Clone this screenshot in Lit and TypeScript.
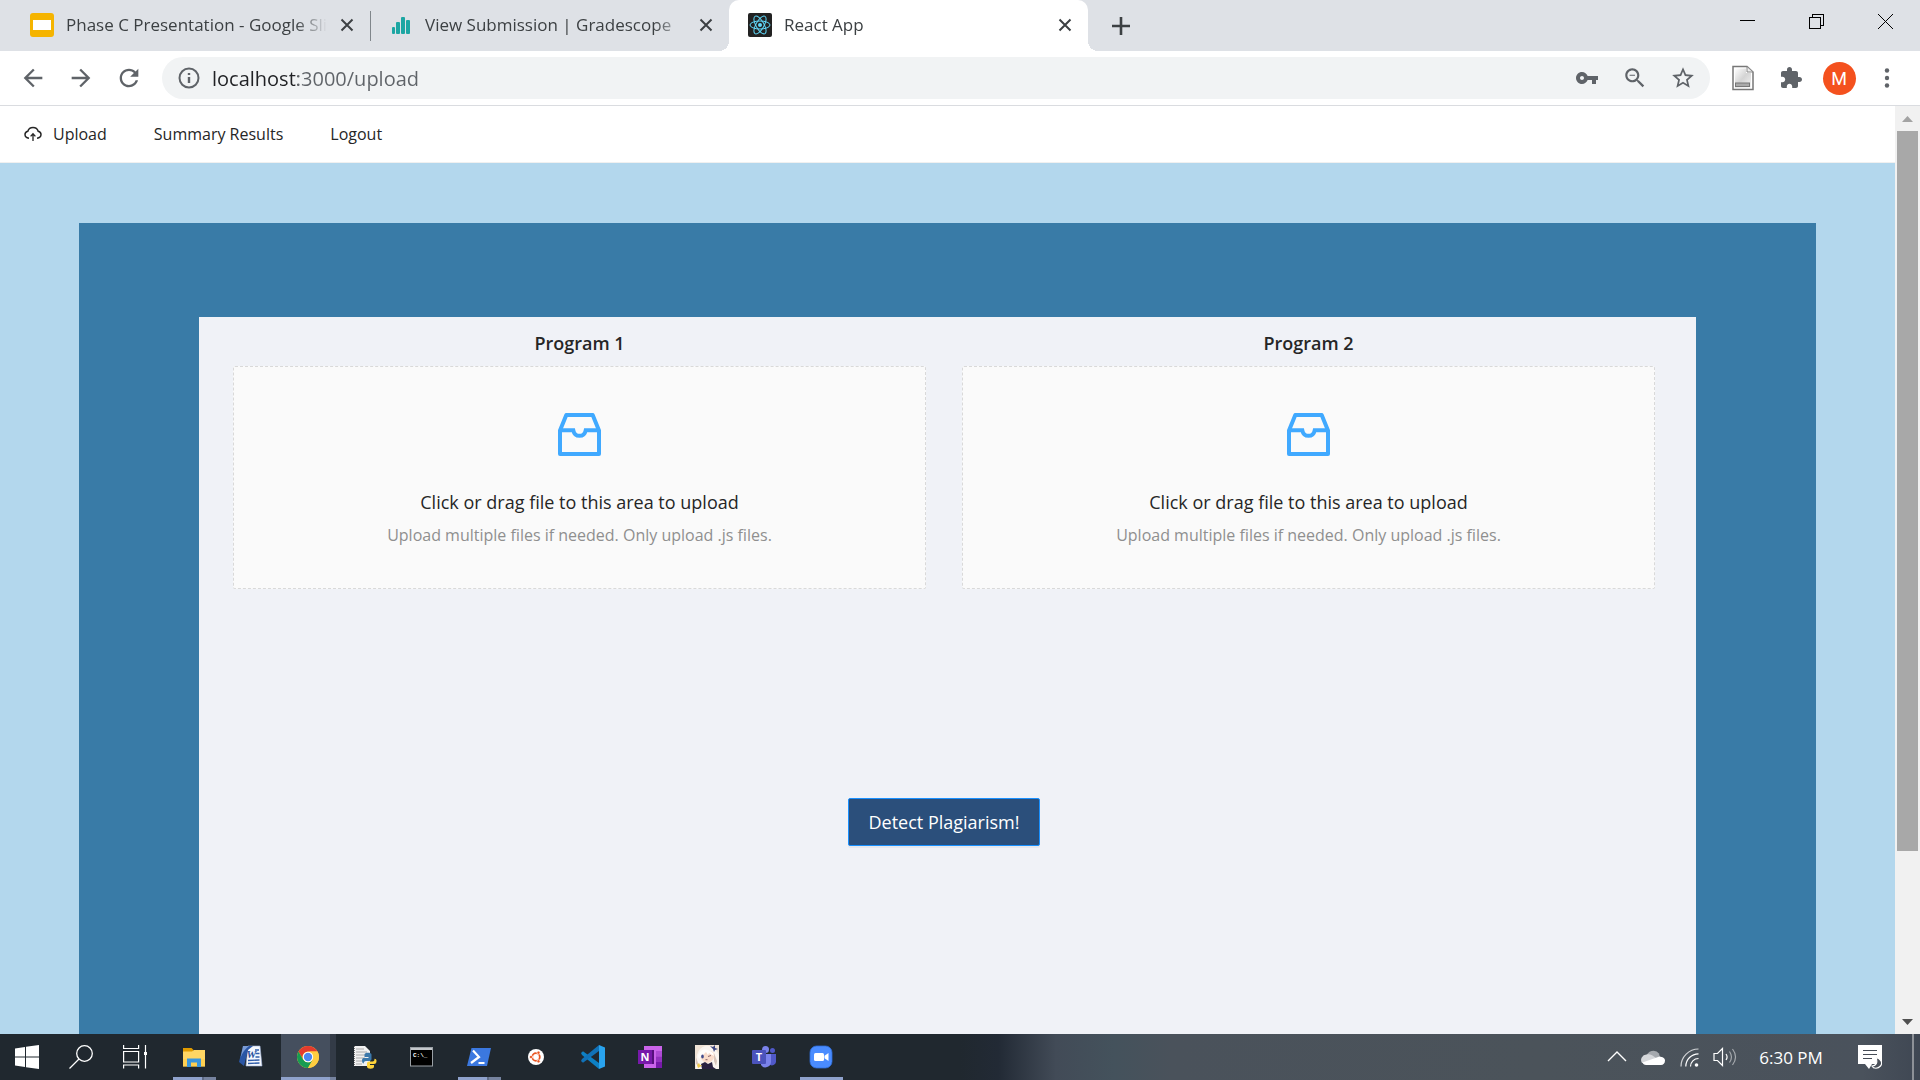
import { LitElement, html, css, svg, nothing, TemplateResult } from "lit";
import { customElement, property } from "lit/decorators.js";
import { classMap } from "lit/directives/class-map.js";

const material = (d: string) => html`<svg viewBox="0 0 24 24" fill="currentColor" aria-hidden="true"><path d=${d} /></svg>`;

const closeIcon = html`<svg viewBox="0 0 14 14" fill="none" stroke="currentColor" stroke-width="2" aria-hidden="true"><path d="M1.5 1.5l11 11M12.5 1.5l-11 11" /></svg>`;

const slidesIcon = html`<svg viewBox="0 0 24 24" aria-hidden="true"><rect width="24" height="24" rx="3" fill="#f5b400" /><rect x="3" y="7" width="18" height="10" fill="#fff" /></svg>`;

const barsIcon = html`<svg viewBox="0 0 24 24" fill="#1ca6a3" aria-hidden="true"><rect x="3" y="14" width="3" height="7" rx="1" /><rect x="7" y="9" width="4" height="12" rx="1" /><rect x="12" y="4" width="4" height="17" rx="1" /><rect x="17" y="7" width="4" height="14" rx="1" /></svg>`;

const reactIcon = html`<svg viewBox="0 0 24 24" aria-hidden="true"><rect width="24" height="24" rx="2" fill="#222" /><g fill="none" stroke="#61dafb" stroke-width="1"><ellipse cx="12" cy="12" rx="10" ry="4" /><ellipse cx="12" cy="12" rx="10" ry="4" transform="rotate(60 12 12)" /><ellipse cx="12" cy="12" rx="10" ry="4" transform="rotate(120 12 12)" /></g><circle cx="12" cy="12" r="2" fill="#61dafb" /></svg>`;

const backIcon = material("M20 11H7.83l5.59-5.59L12 4l-8 8 8 8 1.41-1.41L7.83 13H20v-2z");
const forwardIcon = material("M12 4l-1.41 1.41L16.17 11H4v2h12.17l-5.58 5.59L12 20l8-8z");
const reloadIcon = material("M17.65 6.35C16.2 4.9 14.21 4 12 4c-4.42 0-7.99 3.58-7.99 8s3.57 8 7.99 8c3.73 0 6.84-2.55 7.73-6h-2.08c-.82 2.33-3.04 4-5.65 4-3.31 0-6-2.69-6-6s2.69-6 6-6c1.66 0 3.14.69 4.22 1.78L13 11h7V4l-2.35 2.35z");
const keyIcon = material("M12.65 10C11.83 7.67 9.61 6 7 6c-3.31 0-6 2.69-6 6s2.69 6 6 6c2.61 0 4.83-1.67 5.65-4H17v4h4v-4h2v-4H12.65zM7 14c-1.1 0-2-.9-2-2s.9-2 2-2 2 .9 2 2-.9 2-2 2z");
const zoomOutIcon = material("M15.5 14h-.79l-.28-.27C15.41 12.59 16 11.11 16 9.5 16 5.91 13.09 3 9.5 3S3 5.91 3 9.5 5.91 16 9.5 16c1.61 0 3.09-.59 4.23-1.57l.27.28v.79l5 4.99L20.49 19l-4.99-5zm-6 0C7.01 14 5 11.99 5 9.5S7.01 5 9.5 5 14 7.01 14 9.5 11.99 14 9.5 14zM7 9h5v1H7z");
const starIcon = material("M22 9.24l-7.19-.62L12 2 9.19 8.63 2 9.24l5.46 4.73L5.82 21 12 17.27 18.18 21l-1.63-7.03L22 9.24zM12 15.4l-3.76 2.27 1-4.28-3.32-2.88 4.38-.38L12 6.1l1.71 4.04 4.38.38-3.32 2.88 1 4.28L12 15.4z");
const puzzleIcon = material("M20.5 11H19V7c0-1.1-.9-2-2-2h-4V3.5C13 2.12 11.88 1 10.5 1S8 2.12 8 3.5V5H4c-1.1 0-1.99.9-1.99 2v3.8H3.5c1.49 0 2.7 1.21 2.7 2.7s-1.21 2.7-2.7 2.7H2V20c0 1.1.9 2 2 2h3.8v-1.5c0-1.49 1.21-2.7 2.7-2.7 1.49 0 2.7 1.21 2.7 2.7V22H17c1.1 0 2-.9 2-2v-4h1.5c1.38 0 2.5-1.12 2.5-2.5S21.88 11 20.5 11z");
const infoIcon = html`<svg viewBox="0 0 22 22" fill="none" stroke="currentColor" stroke-width="2" aria-hidden="true"><circle cx="11" cy="11" r="9.5" /><path d="M11 10v6M11 6v2" stroke-width="2.4" /></svg>`;
const documentIcon = html`<svg viewBox="0 0 24 26" aria-hidden="true"><defs><linearGradient id="paper" x2="1" y2="1"><stop stop-color="#fff" /><stop offset=".5" stop-color="#d4d4d4" /><stop offset="1" stop-color="#f2f2f2" /></linearGradient></defs><path d="M2 1.5h14l6 5.5v17.5H2z" fill="#fff" stroke="#777" stroke-width="1.5" /><path d="M4 3.5h11V8h5v14.500H4z" fill="url(#paper)" /><path d="M16 1.5V7h6z" fill="#eee" stroke="#888" /><rect x="4.5" y="18" width="14" height="3.5" fill="#aaa" stroke="#777" /></svg>`;
const dotsIcon = html`<svg viewBox="0 0 24 24" fill="currentColor" aria-hidden="true"><circle cx="12" cy="4.5" r="2.2" /><circle cx="12" cy="12" r="2.2" /><circle cx="12" cy="19.5" r="2.2" /></svg>`;
const plusIcon = html`<svg viewBox="0 0 20 20" fill="none" stroke="currentColor" stroke-width="2.6" aria-hidden="true"><path d="M10 1v18M1 10h18" /></svg>`;

const minimizeIcon = html`<svg viewBox="0 0 15 15" shape-rendering="crispEdges" aria-hidden="true"><rect y="6" width="15" height="1" /></svg>`;
const restoreIcon = html`<svg viewBox="0 0 15 15" fill="none" stroke="currentColor" shape-rendering="crispEdges" aria-hidden="true"><path d="M.5 3.5h11v11H.5zM3.5 3.5v-3h11v11h-3" /></svg>`;
const windowCloseIcon = html`<svg viewBox="0 0 15 15" fill="none" stroke="currentColor" aria-hidden="true"><path d="M0 0l15 15M15 0L0 15" /></svg>`;

const cloudUploadIcon = html`<svg viewBox="0 0 18 16" fill="none" stroke="currentColor" stroke-width="1.5" aria-hidden="true"><path d="M5 12.2C2.6 12 1 10.5 1 8.6 1 7 2.2 5.7 3.8 5.3 4.5 3 6.5 1.5 9 1.5s4.5 1.5 5.2 3.8C15.8 5.7 17 7 17 8.6c0 1.9-1.6 3.4-4 3.6" /><path d="M9 15V8M6.6 10.4L9 7.8l2.4 2.6" stroke-width="1.3" /></svg>`;
const inboxIcon = html`<svg viewBox="0 0 43 43" fill="none" stroke="currentColor" stroke-width="4" stroke-linejoin="round" aria-hidden="true"><path d="M2 17.5L8.3 2h26.400L41 17.5V41H2z" /><path d="M2 17.3h13.3c.7 3.400 3.2 5.5 6.2 5.5s5.500-2.1 6.200-5.500H41" stroke-linejoin="miter" /></svg>`;

/* Taskbar pictures share one 24-unit canvas. */
const bar = (content: unknown) => html`<svg viewBox="0 0 24 24" aria-hidden="true">${content}</svg>`;

const windowsIcon = bar(svg`<path fill="#fff" d="M0 3.4L10 2v9.4H0zM11 1.8L24 0v11.4H11zM0 12.4h10V22L0 20.6zM11 12.4h13V24l-13-1.8z" />`);
const searchIcon = bar(svg`<g fill="none" stroke="#fff" stroke-width="1.3"><circle cx="15.5" cy="8.5" r="7.8" /><path d="M10 14L.5 23.5" /></g>`);
const taskViewIcon = bar(svg`<g fill="none" stroke="#fff" stroke-width="1.2"><path d="M.6 0v3.5h15V0M.6 23.5V20h15v3.5M.6 6.5h15v10.5H.6zM22.5 0v23.5" /></g><rect x="21" y="7" width="3" height="3" fill="#fff" />`);
const explorerIcon = bar(svg`<path fill="#e09b00" d="M1 3h8.5l2 2V9H1z" /><path fill="#ffd664" d="M1 6.5h9l2-1.5h11v16.500H1z" /><path fill="#ffcb45" d="M1 14h22v7.500H1z" opacity=".6" /><path fill="#3a96dd" d="M5 13.5h14V22h-4v-4.5H9V22H5z" />`);
const wordIcon = bar(svg`<path fill="#f5f8fd" stroke="#9fb4d8" stroke-width=".6" d="M9 1h12l2 20H7z" /><path stroke="#2f5daa" stroke-width="1.4" d="M16 5h4M16.500 8.500h4M16.500 12h4M9 15.500l11.500-.5M9 18.500l11.500-.5" /><path fill="#2a56a5" d="M4 1h10L9 5 7 13l-2 8-5-4z" /><path fill="#9db9e8" d="M4 1h6C6 4 3 8 1.500 13z" opacity=".7" /><text x="7.500" y="12.500" font-family="Liberation Serif, serif" font-size="11" font-weight="700" font-style="italic" fill="#274f9c">W</text>`);
const chromeIcon = bar(svg`<circle cx="12" cy="12" r="11" fill="#ffcd40" /><path fill="#e33b2e" d="M2.5 6.5A11 11 0 0 1 21.5 6.5H12A5.5 5.5 0 0 0 7.2 14.8z" /><path fill="#179c52" d="M2.5 6.5L7.2 14.8A5.5 5.5 0 0 0 12.400 17.5L9.8 22.8A11 11 0 0 1 2.5 6.5z" /><path fill="#179c52" d="M7.2 14.8A5.5 5.5 0 0 0 16.8 14.8L12 23 9.8 22.800z" /><path fill="#ffcd40" d="M12 6.5h9.5A11 11 0 0 1 12 23l4.8-8.200A5.5 5.5 0 0 0 12 6.5z" /><circle cx="12" cy="12" r="5.2" fill="#fff" /><circle cx="12" cy="12" r="4.2" fill="#4a86f0" />`);
const pythonIcon = bar(svg`<path fill="#f1f1f1" d="M1 1h11l5 5v15H1z" /><path stroke="#9a9a9a" stroke-width=".8" d="M3 4h8M3 7h11M3 10h11M3 13h9M3 16h6M3 19h6" /><path stroke="#777" stroke-dasharray="1 1" d="M1.5 1v20" /><path fill="#3c78aa" d="M9 15.5c0-2 .8-2.5 2.5-2.500h4v-1h-4V9.5c0-1.2 1.5-1.7 3.5-1.7s3.5.5 3.5 1.8V14c0 1.3-1 2-2 2h-3.5c-1.5 0-2.3 1-2.300 2.500-1.200 0-1.700-1.500-1.700-3z" /><path fill="#ffd43b" d="M23.5 16c0 2-.8 3-2.5 3h-4v1h4v1.8c0 1.2-1.5 2-3.5 2s-3.500-.8-3.500-2V18.500c0-1.300 1-2 2-2h3.500c1.500 0 2-1 2-2.700 1.500 0 2 1 2 2.200z" />`);
const terminalIcon = bar(svg`<rect x=".5" y="2.5" width="22" height="18.5" fill="#000" stroke="#9aa0a6" /><rect x="1" y="3" width="21" height="2" fill="#c4c8cc" /><text x="3" y="12" font-family="Liberation Mono, monospace" font-size="6" font-weight="700" fill="#fff">C:\\_</text>`);
const powershellIcon = bar(svg`<path fill="#3b78e0" d="M4.5 3H24l-4 18H0z" /><path fill="none" stroke="#fff" stroke-width="2.2" d="M6 5.5l6 6.5-8 6M11.5 18h6" />`);
const ubuntuIcon = bar(svg`<circle cx="12" cy="12" r="8" fill="#fff" /><circle cx="12" cy="12" r="3.8" fill="none" stroke="#e95420" stroke-width="1.8" /><g fill="#e95420" stroke="#fff" stroke-width=".7"><circle cx="7" cy="12" r="1.6" /><circle cx="14.5" cy="7.7" r="1.6" /><circle cx="14.5" cy="16.3" r="1.6" /></g>`);
const vscodeIcon = bar(svg`<path fill="#0d80c4" d="M0 8l2-1.8L18 18v6L1 10z" /><path fill="#1172b8" d="M0 16l2 1.8L18 6V0L1 14z" /><path fill="#29a3ee" d="M18 0l6 2.5v19L18 24z" />`);
const onenoteIcon = bar(svg`<path fill="#ca64ea" d="M6 1h18v22H6z" /><path fill="#ae4bd5" d="M18 6h6v5.5h-6z" /><path fill="#9332bf" d="M18 11.5h6V17h-6z" /><path fill="#7719aa" d="M18 17h6v6h-6z" /><path fill="#56107d" d="M6 5h10v14H6z" /><rect y="5" width="14" height="14" fill="#7719aa" /><text x="7" y="15.8" text-anchor="middle" font-family="Open Sans, sans-serif" font-size="11" font-weight="700" fill="#fff">N</text>`);
const portraitIcon = bar(svg`<rect width="24" height="24" fill="#efe3d6" /><path fill="#faf5f0" d="M1 24C0 14 2 3 10 1c8-1 12 4 14 10v13z" /><path fill="#f9dccb" d="M5 9c3-4 11-5 14 0 1 5-2 8-7 9-4-1-7-4-7-9z" /><path fill="#fffdfb" d="M3 11C5 4 11 2 18 8l1 3-5-3-1 2-2-3-4 4v-1l-3 4z" /><path fill="#d8c5bb" d="M19 8l3 8-1 5-2-5zM1 12l2 6 1 3-3-2z" /><ellipse cx="7.500" cy="11.500" rx="1.300" ry="1.900" fill="#3f4a8c" /><path fill="none" stroke="#6b4552" stroke-width=".8" d="M13 11.500l3-1M10.500 14.700h2" /><path fill="#2a2140" d="M7 24l-1-5 4-2 3 2 4-2 1 5 3 2z" /><path fill="#3b4580" d="M15 1l3 1 2-2 0 3 3 1-3 1-1 2-1-3z" /><path fill="#efc94f" d="M2 20l2-2 1 2 2 0-2 2-2 1z" />`);
const teamsIcon = bar(svg`<circle cx="13.5" cy="4.5" r="3.5" fill="#7b83eb" /><circle cx="20.5" cy="5.5" r="2.5" fill="#5059c9" /><path fill="#5059c9" d="M17 9h7v7a4 4 0 0 1-7 3z" /><path fill="#7b83eb" d="M9 9h10v8a5.5 5.5 0 0 1-10 3z" /><rect y="5" width="14" height="14" rx="1" fill="#4b53bc" /><text x="7" y="15.8" text-anchor="middle" font-family="Open Sans, sans-serif" font-size="11" font-weight="700" fill="#fff">T</text>`);
const meetingIcon = bar(svg`<rect x="1" y="1" width="22" height="22" rx="6.5" fill="#4a8cff" stroke="#2f6dd8" stroke-width=".8" /><rect x="5" y="8" width="10" height="8" rx="1.5" fill="#fff" /><path fill="#fff" d="M15.5 10.8L19.5 8v8l-4-2.8z" />`);

const chevronIcon = bar(svg`<path fill="none" stroke="#fff" stroke-width="1.4" d="M3 16l9-9 9 9" />`);
const cloudIcon = bar(svg`<path fill="#a5a9ae" d="M5.5 12A7 7 0 0 1 18 8.5l1 4-8 3z" /><path fill="#d5d7da" d="M1 18A5.500 5.500 0 0 1 5.500 9.500c3-1 6 .5 9.500 3.500l-9 5z" /><path fill="#fff" d="M1.500 17.500L18.500 11.500c3 .2 5.500 1.700 5.500 4.300s-1.800 4.200-4 4.200H5c-2 0-3-1-3.500-2.500z" />`);
const wifiIcon = bar(svg`<g fill="none" stroke="#fff" stroke-width="1.2"><path d="M4 21.5C4 12 12 4 21.5 4" opacity=".75" /><path d="M8.8 21.5C8.8 14.5 14.5 8.8 21.5 8.8M13.5 21.5c0-4.5 3.5-8 8-8" /></g><circle cx="19.5" cy="20" r="1.8" fill="#fff" />`);
const volumeIcon = bar(svg`<g fill="none" stroke="#fff" stroke-width="1.2"><path d="M1 8.5h3.5L9.5 3.5v17l-5-5H1z" /><path d="M13 9c1.3 1.8 1.3 4.2 0 6" /><path d="M16.5 6.5c2.5 3.5 2.5 7.5 0 11M19.5 4c3.8 5 3.8 11 0 16" opacity=".5" /></g>`);
const noticeIcon = bar(svg`<path fill="#fff" d="M0 0h24v19H14l-3 5-4-5H0z" /><path stroke="#454c56" stroke-width="1.2" d="M5 5.5h14M5 9.5h14M5 13.5h9" /><path fill="#4a5059" stroke="#fff" stroke-width="1.2" d="M18 12.5c5 1 7 5.5 4.5 8.5-2.5 3-7 3-8.5 0 4 0 6-3.5 4-8.5z" />`);

interface TaskItem {
  name: string;
  icon: TemplateResult;
  state?: "open" | "stacked" | "active";
}

const tasks: TaskItem[] = [
  { name: "File Explorer", icon: explorerIcon, state: "stacked" },
  { name: "Word", icon: wordIcon },
  { name: "Chrome", icon: chromeIcon, state: "active" },
  { name: "Python IDLE", icon: pythonIcon },
  { name: "Command Prompt", icon: terminalIcon },
  { name: "PowerShell", icon: powershellIcon, state: "stacked" },
  { name: "Ubuntu", icon: ubuntuIcon },
  { name: "Visual Studio Code", icon: vscodeIcon },
  { name: "OneNote", icon: onenoteIcon },
  { name: "Game", icon: portraitIcon },
  { name: "Teams", icon: teamsIcon },
  { name: "Zoom", icon: meetingIcon, state: "open" },
];

const reset = css`
  *, :host { box-sizing: border-box; }
  button, input { font: inherit; color: inherit; background: none; border: 0; padding: 0; margin: 0; }
  svg { display: block; flex: none; }
  a { color: inherit; text-decoration: none; }
`;

@customElement("tab-strip")
class TabStrip extends LitElement {
  static styles = [reset, css`
    :host { display: flex; height: 51px; padding-left: 11px; background: #dee1e6; color: #3c4043; font-size: 17px; }
    .tab { position: relative; flex: 0 1 359px; min-width: 0; display: flex; align-items: center; gap: 12px; padding: 0 15px 2px 19px; }
    .tab > svg { width: 24px; height: 24px; }
    .title { flex: 1; min-width: 0; overflow: hidden; white-space: nowrap; line-height: 24px; mask-image: linear-gradient(90deg, #000 calc(100% - 32px), transparent); }
    .divided::before { content: ""; position: absolute; left: 0; top: 11px; bottom: 10px; width: 1px; background: #80868b; }
    .active { background: #fff; border-radius: 10px 10px 0 0; }
    .active::before, .active::after { content: ""; position: absolute; bottom: 0; width: 10px; height: 10px; }
    .active::before { right: 100%; background: radial-gradient(circle at 0 0, transparent 10px, #fff 10px); }
    .active::after { left: 100%; background: radial-gradient(circle at 100% 0, transparent 10px, #fff 10px); }
    .close { display: grid; place-items: center; width: 16px; height: 16px; }
    .close svg { width: 14px; height: 14px; }
    .add { display: grid; place-items: center; width: 66px; }
    .add svg { width: 20px; height: 20px; }
    .window { display: flex; margin-left: auto; height: 43px; color: #000; }
    .window button { display: grid; place-items: center; width: 69px; }
    .window svg { width: 15px; height: 15px; }
  `];
  render() {
    const tabs = [
      { title: "Phase C Presentation - Google Slides", icon: slidesIcon },
      { title: "View Submission | Gradescope", icon: barsIcon, divided: true },
      { title: "React App", icon: reactIcon, active: true },
    ];
    return html`
      ${tabs.map(t => html`
        <div class=${classMap({ tab: true, active: !!t.active, divided: !!t.divided })}>
          ${t.icon}<span class="title">${t.title}</span>
          <button class="close" aria-label="Close tab">${closeIcon}</button>
        </div>`)}
      <button class="add" aria-label="New tab">${plusIcon}</button>
      <div class="window">
        <button aria-label="Minimize">${minimizeIcon}</button>
        <button aria-label="Restore">${restoreIcon}</button>
        <button aria-label="Close">${windowCloseIcon}</button>
      </div>`;
  }
}

@customElement("browser-toolbar")
class BrowserToolbar extends LitElement {
  static styles = [reset, css`
    :host { display: flex; align-items: center; height: 55px; padding: 0 9px; background: #fff; border-bottom: 1px solid #dadce0; color: #5f6368; }
    .tool { display: grid; place-items: center; width: 48px; height: 42px; flex: none; }
    .tool svg { width: 24px; height: 24px; }
    .nav svg { width: 28px; height: 28px; }
    .wide svg { width: 26px; height: 26px; }
    .address { flex: 1; min-width: 0; display: flex; align-items: center; height: 42px; margin: 0 9px; padding: 0 3px 0 16px; border-radius: 21px; background: #f1f3f4; }
    .address > svg { width: 22px; height: 22px; margin-right: 12px; }
    .address input { flex: 1; min-width: 0; height: 30px; font-size: 20px; color: transparent; background: linear-gradient(90deg, #202124 86px, #5f6368 86px); background-clip: text; -webkit-background-clip: text; }
    .avatar { display: grid; place-items: center; width: 33px; height: 33px; border-radius: 50%; background: #f4511e; color: #fff; font: 18px/33px Roboto, sans-serif; }
  `];
  render() {
    return html`
      <button class="tool nav" aria-label="Back">${backIcon}</button>
      <button class="tool nav" aria-label="Forward">${forwardIcon}</button>
      <button class="tool nav" aria-label="Reload">${reloadIcon}</button>
      <div class="address">
        ${infoIcon}
        <input type="text" aria-label="Address" value="localhost:3000/upload" />
        <button class="tool" aria-label="Passwords">${keyIcon}</button>
        <button class="tool wide" aria-label="Zoom">${zoomOutIcon}</button>
        <button class="tool wide" aria-label="Bookmark">${starIcon}</button>
      </div>
      <button class="tool wide" aria-label="Document extension">${documentIcon}</button>
      <button class="tool" aria-label="Extensions">${puzzleIcon}</button>
      <button class="tool" aria-label="Profile"><span class="avatar">M</span></button>
      <button class="tool" aria-label="Menu">${dotsIcon}</button>`;
  }
}

@customElement("upload-area")
class UploadArea extends LitElement {
  @property() heading = "";
  static styles = [reset, css`
    :host { display: block; text-align: center; }
    h2 { margin: 0 0 8px; font-size: 18px; line-height: 30px; font-weight: 600; }
    label { position: relative; display: flex; flex-direction: column; align-items: center; padding: 46px 16px 36px; border: 1px dashed #d9d9d9; border-radius: 2px; background: #fafafa; cursor: pointer; }
    input { position: absolute; inset: 0; width: 100%; height: 100%; opacity: 0; cursor: pointer; }
    svg { width: 43px; height: 43px; margin-bottom: 30px; color: #40a9ff; }
    .prompt { font-size: 18px; line-height: 33px; }
    .hint { font-size: 16px; line-height: 33px; color: #8f8f8f; }
  `];
  render() {
    return html`
      <h2>${this.heading}</h2>
      <label>
        <input type="file" multiple accept=".js" />
        ${inboxIcon}
        <span class="prompt">Click or drag file to this area to upload</span>
        <span class="hint">Upload multiple files if needed. Only upload .js files.</span>
      </label>`;
  }
}

@customElement("upload-page")
class UploadPage extends LitElement {
  static styles = [reset, css`
    :host { display: flex; flex-direction: column; min-width: 0; background: #b3d7ed; color: #262626; }
    nav { display: flex; align-items: center; gap: 47px; height: 57px; padding-left: 24px; background: #fff; border-bottom: 1px solid #f0f0f0; font-size: 16px; }
    nav a { display: flex; align-items: center; gap: 11px; }
    nav svg { width: 18px; height: 16px; }
    .frame { flex: 1; display: flex; margin: 60px 79px 0; padding: 94px 120px 0; background: #397ba7; }
    main { flex: 1; padding: 11px 41px 0 34px; background: #f0f2f7; }
    .areas { display: grid; grid-template-columns: 1fr 1fr; gap: 36px; }
    .detect { display: block; width: 192px; height: 48px; margin: 209px auto 0; border: 1px solid #1890ff; border-radius: 2px; background: #2b4f7b; color: #fff; font-size: 18px; box-shadow: 0 2px 0 rgba(0, 0, 0, 0.04); }
  `];
  render() {
    return html`
      <nav>
        <a href="#upload">${cloudUploadIcon}Upload</a>
        <a href="#summary">Summary Results</a>
        <a href="#logout">Logout</a>
      </nav>
      <div class="frame">
        <main>
          <div class="areas">
            <upload-area heading="Program 1"></upload-area>
            <upload-area heading="Program 2"></upload-area>
          </div>
          <button class="detect">Detect Plagiarism!</button>
        </main>
      </div>`;
  }
}

@customElement("page-scrollbar")
class PageScrollbar extends LitElement {
  static styles = [reset, css`
    :host { display: flex; flex-direction: column; width: 25px; background: #f1f1f1; }
    button { display: grid; place-items: center; height: 25px; color: #a3a3a3; }
    .down { color: #505050; }
    svg { width: 11px; height: 6px; }
    .track { flex: 1; padding: 0 2px; }
    .thumb { height: 82%; background: #a8a8a8; }
  `];
  render() {
    return html`
      <button aria-label="Scroll up"><svg viewBox="0 0 11 6" fill="currentColor"><path d="M0 6L5.5 0 11 6z" /></svg></button>
      <div class="track"><div class="thumb"></div></div>
      <button class="down" aria-label="Scroll down"><svg viewBox="0 0 11 6" fill="currentColor"><path d="M0 0L5.5 6 11 0z" /></svg></button>`;
  }
}

@customElement("task-bar")
class TaskBar extends LitElement {
  static styles = [reset, css`
    :host { display: flex; height: 46px; color: #fff; background: linear-gradient(90deg, #20282f 50%, #222a35 52%, #424b57 55%, #44525c 58%, #4a525b 61%, #4b535a 80%, #4a525c 97%, #3f4753); }
    .system, .apps, .tray { display: flex; }
    .apps { margin-left: 3px; }
    button { position: relative; display: grid; place-items: center; height: 46px; }
    svg { width: 24px; height: 24px; }
    .system button { width: 54px; }
    .apps button { width: 57px; }
    .active { background: linear-gradient(90deg, #454f5e 49px, #333b47 49px) no-repeat 2px 0 / 55px 100%; }
    .mark { position: absolute; left: 8px; right: 6px; bottom: 0; height: 3px; background: #8fa2cc; }
    .stacked .mark { background: linear-gradient(90deg, #8fa2cc 29px, #5f6c86 29px 31px, #76839f 31px); }
    .active .mark { left: 2px; right: 0; background: linear-gradient(90deg, #8fa2cc 49px, #76839f 49px); }
    .tray { margin-left: auto; }
    .tray .small { width: 36px; }
    .tray .clock { width: 96px; font-size: 17px; white-space: nowrap; }
    .tray .notice { width: 62px; }
    .tray .desktop { width: 8px; margin-left: 11px; border-left: 2px solid #8d9197; }
  `];
  render() {
    return html`
      <div class="system">
        <button aria-label="Start">${windowsIcon}</button>
        <button aria-label="Search">${searchIcon}</button>
        <button aria-label="Task View">${taskViewIcon}</button>
      </div>
      <div class="apps">
        ${tasks.map(t => html`<button class=${t.state ?? ""} aria-label=${t.name}>${t.icon}${t.state ? html`<span class="mark"></span>` : nothing}</button>`)}
      </div>
      <div class="tray">
        <button class="small" aria-label="Show hidden icons">${chevronIcon}</button>
        <button class="small" aria-label="OneDrive">${cloudIcon}</button>
        <button class="small" aria-label="Network">${wifiIcon}</button>
        <button class="small" aria-label="Volume">${volumeIcon}</button>
        <button class="clock">6:30 PM</button>
        <button class="notice" aria-label="Notifications">${noticeIcon}</button>
        <button class="desktop" aria-label="Show desktop"></button>
      </div>`;
  }
}

@customElement("app-root")
class AppRoot extends LitElement {
  static styles = css`
    :host { display: flex; flex-direction: column; min-height: 100vh; font-family: "Open Sans", "Noto Sans", sans-serif; }
    .viewport { flex: 1; display: flex; }
    upload-page { flex: 1; }
  `;
  render() {
    return html`
      <tab-strip></tab-strip>
      <browser-toolbar></browser-toolbar>
      <div class="viewport">
        <upload-page></upload-page>
        <page-scrollbar></page-scrollbar>
      </div>
      <task-bar></task-bar>`;
  }
}
